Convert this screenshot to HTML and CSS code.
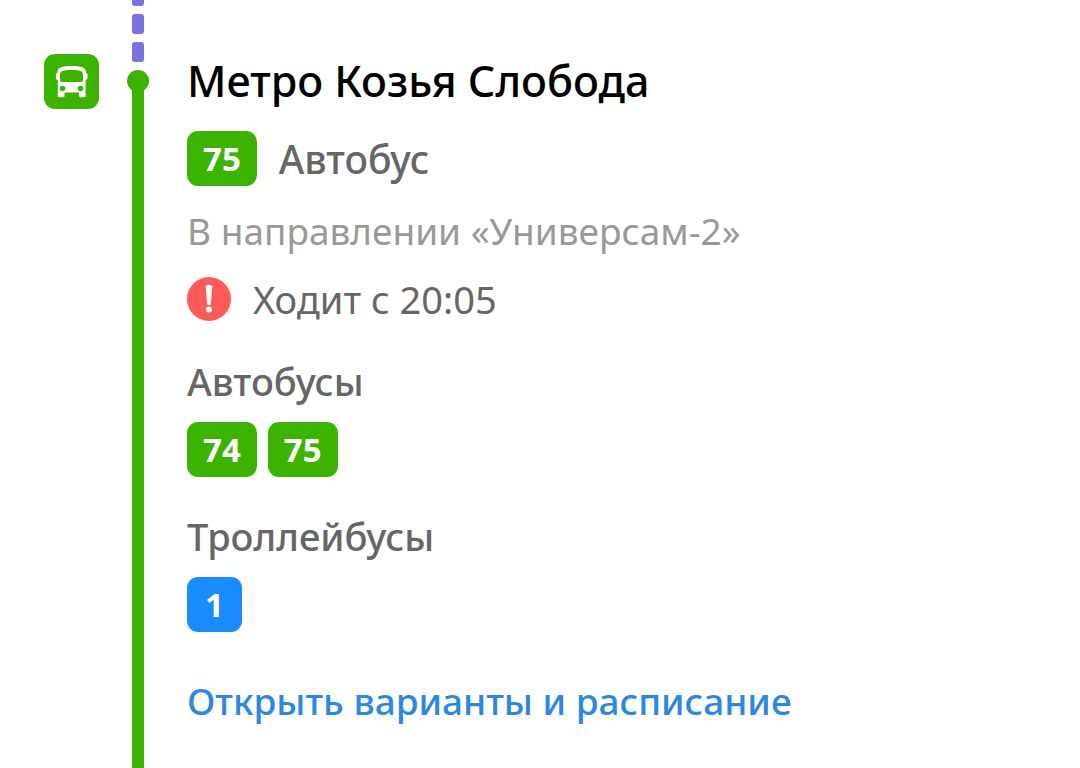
FILE: index.html
```
<!DOCTYPE html>
<html lang="ru">
<head>
    <meta charset="UTF-8">
    <meta name="viewport" content="width=device-width, initial-scale=1.0">
    <title>Метро Козья Слобода</title>
    <link rel="stylesheet" href="styles.css">
</head>
<body>

    <main class="route">
        <!-- Transport type -->
        <div class="transport">
            <svg class="transport-icon" viewBox="0 0 55 55" aria-hidden="true">
                <rect width="55" height="55" rx="11" fill="#3bb300"/>
                <path fill="#fff" fill-rule="evenodd" d="M13.500 17.500C14 13.500 18 12 27.700 12s13.700 1.500 14.200 5.500l.2 1.300c1 .4 1.500 1.200 1.500 2.200v2.500c0 1.300-.8 2.200-2 2.700V42c0 .8-.5 1.200-1.200 1.200h-4.300c-.8 0-1.200-.4-1.200-1.200v-3.500H20.500V42c0 .8-.4 1.200-1.200 1.200h-4.300c-.8 0-1.200-.4-1.200-1.200V26.200c-1.200-.5-1.900-1.400-1.900-2.700V21c0-1 .5-1.800 1.500-2.200zM16 25.800c0 1.500.6 2.200 2 2.200h19c1.400 0 2-.7 2-2.200v-4.800c0-3.800-2.600-5-11.500-5s-11.500 1.200-11.500 5z"/>
                <circle cx="18.500" cy="34.500" r="2.800" fill="#3bb300"/>
                <circle cx="36.500" cy="34.500" r="2.800" fill="#3bb300"/>
            </svg>
        </div>

        <!-- Walking part, then the bus line -->
        <div class="rail">
            <div class="walk">
                <span class="dash"></span>
                <span class="dash"></span>
                <span class="dash"></span>
            </div>
            <div class="stop"></div>
            <div class="line"></div>
        </div>

        <section class="details">
            <h1>Метро Козья Слобода</h1>

            <div class="vehicle">
                <span class="badge">75</span>
                <span class="vehicle-name">Автобус</span>
            </div>

            <p class="direction">В направлении «Универсам-2»</p>

            <div class="notice">
                <svg class="notice-icon" viewBox="0 0 44 44" aria-hidden="true">
                    <circle cx="22" cy="22" r="22" fill="#ff5a5a"/>
                    <path fill="#fff" d="M18.800 10c-.1-1.500 1.200-2 3.200-2s3.300.5 3.200 2l-1.300 16.500c-.1 1.200-.8 1.700-1.900 1.700s-1.800-.5-1.900-1.700z"/>
                    <circle cx="22" cy="32.500" r="3" fill="#fff"/>
                </svg>
                <span>Ходит с 20:05</span>
            </div>

            <h2>Автобусы</h2>
            <div class="badges">
                <span class="badge">74</span>
                <span class="badge">75</span>
            </div>

            <h2>Троллейбусы</h2>
            <div class="badges">
                <span class="badge trolley">1</span>
            </div>

            <a class="more" href="#">Открыть варианты и расписание</a>
        </section>
    </main>

</body>
</html>
```
FILE: styles.css
```
* {
    box-sizing: border-box;
}

body {
    margin: 0;
    background-color: #ffffff;
    color: #666666;
    font-family: "Noto Sans", "Open Sans", sans-serif;
    font-size: 38px;
    line-height: 46px;
}

.route {
    display: flex;
    min-height: 100vh;
    padding: 0 44px;
}

.transport {
    padding-top: 54px;
    margin-right: 28px;
}

.transport-icon {
    display: block;
    width: 55px;
    height: 55px;
}

/* Vertical line on the left */
.rail {
    display: flex;
    flex-direction: column;
    align-items: center;
    flex-shrink: 0;
    width: 22px;
    margin-right: 38px;
}

.walk {
    display: flex;
    flex-direction: column;
    justify-content: flex-end;
    gap: 8px;
    height: 70px;
    padding-bottom: 8px;
    overflow: hidden;
}

.dash {
    flex-shrink: 0;
    width: 12px;
    height: 20px;
    border-radius: 3px;
    background-color: #7773e0;
}

.stop {
    width: 22px;
    height: 22px;
    border-radius: 50%;
    background-color: #3bb300;
}

.line {
    flex: 1;
    width: 12px;
    margin-top: -4px;
    background-color: #3bb300;
}

.details {
    flex: 1;
    padding: 53px 0 44px;
}

h1 {
    margin: 0 0 22px;
    color: #000000;
    font-size: 43px;
    font-weight: 500;
    line-height: 56px;
}

h2 {
    margin: 36px 0 18px;
    font-size: 38px;
    font-weight: 500;
    line-height: 46px;
}

.vehicle,
.notice {
    display: flex;
    align-items: center;
    gap: 22px;
}

.vehicle-name {
    font-size: 39px;
    font-weight: 500;
}

.badges {
    display: flex;
    gap: 11px;
}

.badge {
    min-width: 55px;
    height: 55px;
    padding: 0 16px;
    border-radius: 11px;
    background-color: #3bb300;
    color: #ffffff;
    font-size: 33px;
    font-weight: 700;
    line-height: 55px;
    text-align: center;
}

.trolley {
    background-color: #1a8cff;
}

.direction {
    margin: 22px 0;
    color: #999999;
    font-size: 37px;
}

.notice-icon {
    display: block;
    width: 44px;
    height: 44px;
}

.more {
    display: inline-block;
    margin-top: 46px;
    color: #2b87e3;
    font-size: 37px;
    font-weight: 500;
    text-decoration: none;
}

.more:hover {
    text-decoration: underline;
}
```
